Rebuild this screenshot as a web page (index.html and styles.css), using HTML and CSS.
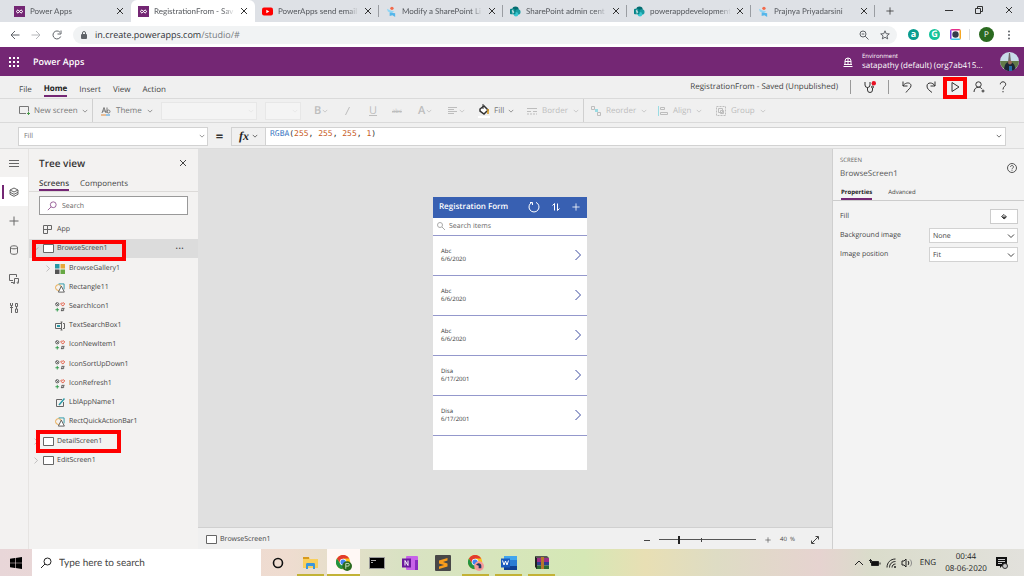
FILE: index.html
```html
<!DOCTYPE html>
<html lang="en">
  <head>
    <meta charset="UTF-8" />
    <meta name="viewport" content="width=device-width, initial-scale=1.0" />
    <title>RegistrationFrom - Saved (Unpublished) - Power Apps</title>
    <link rel="stylesheet" href="styles.css">
  </head>
  <body>
    <svg class="sprite" aria-hidden="true">
      <symbol id="i-close" viewBox="0 0 8 8"><path d="M1 1l6 6M7 1L1 7" /></symbol>
      <symbol id="i-chev" viewBox="0 0 8 8"><path d="M1 2.5l3 3 3-3" /></symbol>
      <symbol id="i-right" viewBox="0 0 8 12"><path d="M1.5 1l5 5-5 5" /></symbol>
      <symbol id="i-plus" viewBox="0 0 10 10"><path d="M5 .5v9M.5 5h9" /></symbol>
      <symbol id="i-search" viewBox="0 0 12 12"><circle cx="7.5" cy="4.5" r="3.5" /><path d="M5 7L1 11" /></symbol>
      <symbol id="i-screen" viewBox="0 0 11 9"><path d="M.5.500h10v8H.500z" fill="#fff" /></symbol>
      <symbol id="i-power" viewBox="0 0 11 11">
        <rect width="11" height="11" fill="#742774" stroke="none" />
        <path d="M5.500 5.500L4 3.800 2.200 5.500 4 7.200l3-3.400 1.800 1.700L7 7.200z" stroke="#fff" fill="none" />
      </symbol>
      <symbol id="i-share" viewBox="0 0 12 12">
        <g stroke="none"><circle cx="6" cy="4" r="3.500" fill="#036c70" /><circle cx="8.500" cy="6.500" r="3" fill="#1a9ba1" /><circle cx="6.500" cy="9" r="2.500" fill="#37c6d0" /><rect y="3" width="6" height="6" rx="1" fill="#038387" /></g>
        <path d="M4 4.500H2.500v1.500H4v1.500H2" stroke="#fff" stroke-width=".8" fill="none" />
      </symbol>
      <symbol id="i-forum" viewBox="0 0 12 12">
        <g stroke="none"><circle cx="6.500" cy="2.500" r="1.800" fill="#f26a4b" /><path d="M1 3l4 2 4 1-3 2-4-2z" fill="#8fd5f5" /><path d="M4 7l6 1v4l-3-2-3 1z" fill="#55b6ea" /></g>
      </symbol>
      <symbol id="i-icons" viewBox="0 0 11 11">
        <circle cx="2.500" cy="2.500" r="1.800" stroke="#555" /><path d="M1.300 1.300l2.400 2.400" stroke="#555" />
        <path d="M8.500 4.500L6.700 2.500a1 1 0 011.800-1 1 1 0 011.800 1z" stroke="#e0492f" />
        <path d="M2.500 6.500v4M.5 8.500h4" stroke="#2a9a45" />
        <path d="M6.500 9.500h3v-2M10.500 7h-3v3" stroke="#555" />
      </symbol>
      <symbol id="i-shape" viewBox="0 0 11 11">
        <circle cx="3.800" cy="5" r="3.200" stroke="#e8a33d" /><path d="M4 1h6v6" stroke="#2795a5" /><path d="M7 3.500l3.300 6.500H3.700z" stroke="#555" fill="#fff" />
      </symbol>
      <symbol id="i-chrome" viewBox="0 0 18 18">
        <g stroke="none"><circle cx="8" cy="8" r="8" fill="#fbc116" /><path d="M1 4a8 8 0 0114 0H8L5 9.500z" fill="#e33b2e" /><path d="M1 4l4 6 5 1-3 5A8 8 0 011 4z" fill="#229342" /><circle cx="8" cy="8" r="3.800" fill="#fff" /><circle cx="8" cy="8" r="3" fill="#4285f4" /></g>
      </symbol>
    </svg>

    <!-- browser tabs -->
    <div class="tabs">
      <div class="tab"><svg class="fav"><use href="#i-power" /></svg><span>Power Apps</span><button aria-label="Close tab"><svg class="ic8"><use href="#i-close" /></svg></button></div>
      <div class="tab active"><svg class="fav"><use href="#i-power" /></svg><span>RegistrationFrom - Sav</span><button aria-label="Close tab"><svg class="ic8"><use href="#i-close" /></svg></button></div>
      <div class="tab sep"><svg class="fav" viewBox="0 0 11 11"><rect y="1.500" width="11" height="8" rx="2" fill="#f00" stroke="none" /><path d="M4.300 3.700v3.600l3-1.800z" fill="#fff" stroke="none" /></svg><span>PowerApps send email</span><button aria-label="Close tab"><svg class="ic8"><use href="#i-close" /></svg></button></div>
      <div class="tab sep"><svg class="fav"><use href="#i-forum" /></svg><span>Modify a SharePoint Li</span><button aria-label="Close tab"><svg class="ic8"><use href="#i-close" /></svg></button></div>
      <div class="tab sep"><svg class="fav"><use href="#i-share" /></svg><span>SharePoint admin cent</span><button aria-label="Close tab"><svg class="ic8"><use href="#i-close" /></svg></button></div>
      <div class="tab sep"><svg class="fav"><use href="#i-share" /></svg><span>powerappdevelopment</span><button aria-label="Close tab"><svg class="ic8"><use href="#i-close" /></svg></button></div>
      <div class="tab sep"><svg class="fav"><use href="#i-forum" /></svg><span>Prajnya Priyadarsini</span><button aria-label="Close tab"><svg class="ic8"><use href="#i-close" /></svg></button></div>
      <button class="new-tab" aria-label="New tab"><svg class="ic8"><use href="#i-plus" /></svg></button>
      <div class="win">
        <button aria-label="Minimize"><svg class="ic8" viewBox="0 0 8 8"><path d="M0 4.500h8" /></svg></button>
        <button aria-label="Restore"><svg class="ic8" viewBox="0 0 8 8"><path d="M.5 2.500h5v5h-5zM2.500 2.500v-2h5v5h-2" /></svg></button>
        <button aria-label="Close"><svg class="ic8"><use href="#i-close" /></svg></button>
      </div>
    </div>

    <div class="address">
      <button aria-label="Back"><svg class="ic10" viewBox="0 0 10 10"><path d="M9.500 5H1M5 1L1 5l4 4" /></svg></button>
      <button class="off" aria-label="Forward"><svg class="ic10" viewBox="0 0 10 10"><path d="M.5 5H9M5 1l4 4-4 4" /></svg></button>
      <button aria-label="Reload"><svg class="ic10" viewBox="0 0 10 10"><path d="M8.700 6.500A4 4 0 118 2.300M9 .5V4H5.500" /></svg></button>
      <div class="url">
        <svg class="lock" viewBox="0 0 6 8"><rect y="3" width="6" height="5" rx="1" fill="#5f6368" stroke="none" /><path d="M1.500 3V2a1.500 1.500 0 013 0v1" /></svg>
        <span class="path">in.create.powerapps.com<i>/studio/#</i></span>
        <svg class="ic10" viewBox="0 0 10 10"><circle cx="4" cy="4" r="3" /><path d="M6.200 6.200L9.500 9.500M2.700 4h2.600" /></svg>
        <svg class="ic10" viewBox="0 0 10 10"><path d="M5 .8l1.200 2.900 3.100.2-2.400 2 .8 3L5 7.300 2.300 8.900l.8-3-2.400-2 3.100-.2z" /></svg>
      </div>
      <div class="exts">
        <b class="ext teal">a</b>
        <b class="ext green">G</b>
        <svg class="ext-cam" viewBox="0 0 11 11"><path d="M0 0h11L5.500 5.500z" fill="#e6308a" /><path d="M11 0v11L5.500 5.500z" fill="#f5a623" /><path d="M11 11H0l5.500-5.500z" fill="#3dc6e8" /><path d="M0 11V0l5.500 5.500z" fill="#7b3fe4" /><rect x="1.500" y="1.500" width="8" height="8" rx="1" fill="#fff" /><circle cx="5.500" cy="5.500" r="3.200" fill="#333c4a" /></svg>
      </div>
      <b class="profile">P</b>
      <button class="more" aria-label="Menu"><svg class="ic10" viewBox="0 0 10 10"><g fill="#5f6368" stroke="none"><circle cx="5" cy="1.500" r="1" /><circle cx="5" cy="5" r="1" /><circle cx="5" cy="8.500" r="1" /></g></svg></button>
    </div>

    <header class="suite">
      <svg class="waffle" viewBox="0 0 10 10"><path d="M0 1h10M0 5h10M0 9h10" stroke="#fff" stroke-width="2" stroke-dasharray="2 2" /></svg>
      <h1>Power Apps</h1>
      <svg class="env-icon" viewBox="0 0 10 10"><path d="M2 7V4a3 3 0 016 0v3M.5 9.500h9M1 7.500h8M5 1v6M2 4.500h6" /></svg>
      <div class="env"><small>Environment</small><span>satapathy (default) (org7ab415...</span></div>
      <svg class="avatar" viewBox="0 0 19 19"><g stroke="none"><circle cx="9.500" cy="9.500" r="9.500" fill="#c9dcea" /><path d="M0 9h19a9.500 9.500 0 01-19 0z" fill="#627a49" /><path d="M9 1h1l1 9H8z" fill="#6d6a68" /><path d="M4 17c1-5 2-7 5.500-7s5 2 6 7a9.500 9.500 0 01-11.500 0z" fill="#1d2635" /><circle cx="10" cy="10.500" r="2" fill="#9a6a55" /><path d="M9 14h3v5H9z" fill="#276ca8" /></g></svg>
    </header>

    <nav class="menu">
      <a href="#file">File</a>
      <a href="#home" class="on">Home</a>
      <a href="#insert">Insert</a>
      <a href="#view">View</a>
      <a href="#action">Action</a>
      <span class="status">RegistrationFrom - Saved (Unpublished)</span>
      <div class="tools">
        <button class="checker" aria-label="App checker"><svg class="ic12" viewBox="0 0 12 12"><path d="M1 1v3a2.500 2.500 0 005 0V1M3.500 6.500V9a2.500 2.500 0 005 0V7" /><circle cx="8.500" cy="6" r="1" /><circle cx="9.800" cy="2.200" r="2.200" fill="#e81123" stroke="none" /></svg></button>
        <button aria-label="Undo"><svg class="ic12" viewBox="0 0 12 12"><path d="M2 .5v4.500h4.500M2 5c2-4 8-4 8-.3C10 7 7 8.500 5 11.500" /></svg></button>
        <button aria-label="Redo"><svg class="ic12" viewBox="0 0 12 12"><path d="M10 .5v4.500H5.500M10 5C8 1 2 1 2 5c0 3 2 4 5 6.500" /></svg></button>
        <button class="play" aria-label="Preview the app"><svg class="ic12" viewBox="0 0 12 12"><path d="M3 1.500v9L10 6z" /></svg></button>
        <button aria-label="Share"><svg class="ic12" viewBox="0 0 12 12"><circle cx="5.500" cy="3.500" r="2.700" /><path d="M1 11c0-3 2-4.800 4.500-4.800 1.500 0 2.700.6 3.500 1.800M10 8.500v3M8.500 10h3" /></svg></button>
        <button aria-label="Help"><svg class="ic12" viewBox="0 0 12 12"><path d="M3.300 3.300c0-3.300 5.400-3.300 5.400 0C8.700 5.500 6 5.500 6 8.500M6 10v1.300" /></svg></button>
      </div>
    </nav>

    <div class="ribbon">
      <button class="grp lit"><svg class="scr" viewBox="0 0 11 9"><path d="M7 7.500H.5v-7h9v5" /><path d="M9.500 6v3M8 7.500h3" stroke="#4a9b4a" /></svg>New screen<svg class="ic6"><use href="#i-chev" /></svg></button>
      <button class="lit theme"><svg class="ic10" viewBox="0 0 10 10"><path d="M1 7l2-5.500L5 7M2 5h2M6 1.500V7M6 5.500c0-2 3-2 3 0s-3 2-3 0" /><path d="M0 9h5" stroke="#e08a3c" /><path d="M5 9h4" stroke="#3c9ae0" /></svg>Theme<svg class="ic6"><use href="#i-chev" /></svg></button>
      <div class="pick font-pick"><select disabled aria-label="Font"></select><svg class="ic6"><use href="#i-chev" /></svg></div>
      <div class="pick size-pick"><select disabled aria-label="Font size"></select><svg class="ic6"><use href="#i-chev" /></svg></div>
      <button disabled class="tight" aria-label="Bold"><b class="glyph">B</b><svg class="ic6"><use href="#i-chev" /></svg></button>
      <button disabled class="tight" aria-label="Italic"><svg class="ic10" viewBox="0 0 10 10"><path d="M5.500 1l-4 8" /></svg></button>
      <button disabled class="tight" aria-label="Underline"><u class="glyph">U</u></button>
      <button disabled class="tight" aria-label="Strikethrough"><s class="strike">abc</s></button>
      <button disabled class="tight" aria-label="Font color"><b class="glyph">A</b><svg class="ic6"><use href="#i-chev" /></svg></button>
      <button disabled class="tight" aria-label="Text align"><svg class="ic10" viewBox="0 0 10 10"><path d="M0 1.500h9M0 3.500h6M0 5.500h9M0 7.500h6" /></svg><svg class="ic6"><use href="#i-chev" /></svg></button>
      <button class="lit fill-btn"><svg class="bucket" viewBox="0 0 12 14"><path d="M2 5l4-3 4 4-4 4-4-3z" stroke="#333" fill="#fff" stroke-width="1.500" /><path d="M5 0v5" stroke="#333" /><path d="M10 5v5" stroke="#d99a1c" stroke-width="1.500" /><path d="M0 13h12" stroke="#fff" stroke-width="2" /></svg>Fill<svg class="ic6"><use href="#i-chev" /></svg></button>
      <button disabled class="grp"><svg class="ic10" viewBox="0 0 10 10"><path d="M0 2.500h10M0 5.500h4M6 5.500h4" /><path d="M0 8h10" stroke-dasharray="2 1" /></svg>Border<svg class="ic6"><use href="#i-chev" /></svg></button>
      <button disabled><svg class="ic10" viewBox="0 0 10 10"><path d="M.5.500h3v3h-3zM6.500 6.500h3v3h-3z" /><path d="M4 3h3v3H4z" stroke="none" fill="#9adbe3" /></svg>Reorder<svg class="ic6"><use href="#i-chev" /></svg></button>
      <button disabled><svg class="ic10" viewBox="0 0 10 10"><path d="M.5 0v10" stroke="#9adbe3" /><path d="M2.500 1.500h4v2h-4zM2.500 6.500h7v2h-7z" /></svg>Align<svg class="ic6"><use href="#i-chev" /></svg></button>
      <button disabled><svg class="ic10" viewBox="0 0 10 10"><path d="M.5.500h9v9h-9z" stroke-dasharray="2 1" /><path d="M2.500 2.500h4v4h-4zM4.500 4.500h3v3h-3z" /></svg>Group<svg class="ic6"><use href="#i-chev" /></svg></button>
    </div>

    <div class="formula">
      <div class="pick prop"><select aria-label="Property"><option>Fill</option></select><svg class="ic6"><use href="#i-chev" /></svg></div>
      <b class="equals">=</b>
      <button class="fx"><em>fx</em><svg class="ic6"><use href="#i-chev" /></svg></button>
      <div class="code" role="textbox" contenteditable="true" spellcheck="false" aria-label="Formula"><span class="fn">RGBA</span>(<span class="num">255</span>, <span class="num">255</span>, <span class="num">255</span>, <span class="num">1</span>)</div>
      <button class="expand" aria-label="Expand formula bar"><svg class="ic6"><use href="#i-chev" /></svg></button>
    </div>

    <main class="studio">
      <nav class="rail">
        <button aria-label="Expand"><svg class="ic10" viewBox="0 0 10 10"><path d="M0 2.500h10M0 5.500h10M0 8.500h10" /></svg></button>
        <button class="on" aria-label="Tree view"><svg class="ic10" viewBox="0 0 10 10"><path d="M5 1l4 2-4 2-4-2zM1 3v2.300l4 2 4-2V3M1 5.300v2l4 2 4-2v-2" /></svg></button>
        <button aria-label="Insert"><svg class="ic10"><use href="#i-plus" /></svg></button>
        <button aria-label="Data"><svg class="ic10" viewBox="0 0 10 10"><path d="M1.500 2.300v5.500c0 2 7 2 7 0V2.300c0-2-7-2-7 0s7 2 7 0" /></svg></button>
        <button aria-label="Media"><svg class="ic10" viewBox="0 0 10 10"><path d="M4 6.500H.5v-6h7V3M2 8.500h2M5.500 9V4.500h4v4" /><circle cx="5" cy="9" r=".7" /><circle cx="8.800" cy="8.700" r=".7" /></svg></button>
        <button aria-label="Advanced tools"><svg class="ic10" viewBox="0 0 10 10"><path d="M1.500 0v2.500h2V0M2.500 3v7M1 4.500h3M6.500.500h2v3h-2zM7.500 3.500V6M6.500 6h2v3.500h-2z" /></svg></button>
      </nav>

      <section class="tree">
        <div class="tree-head"><h2>Tree view</h2><button aria-label="Close"><svg class="ic8"><use href="#i-close" /></svg></button></div>
        <div class="tree-tabs"><a href="#screens" class="on">Screens</a><a href="#components">Components</a></div>
        <label class="find"><svg class="ic10"><use href="#i-search" /></svg><input type="text" placeholder="Search" aria-label="Search" /></label>
        <ul class="nodes">
          <li class="top"><i></i><svg class="ic10" viewBox="0 0 10 10"><path d="M.5.500h4v8h-4zM.5 4.500h8v-4h-4" /></svg><span>App</span></li>
          <li class="top sel"><svg class="down"><use href="#i-chev" /></svg><svg class="scr"><use href="#i-screen" /></svg><span>BrowseScreen1</span><button aria-label="More">···</button><div class="mark"></div></li>
          <li class="sub"><svg class="twist"><use href="#i-right" /></svg><svg class="ic10" viewBox="0 0 10 10"><g stroke="none"><path d="M0 0h4.500v4.500H0z" fill="#2b98a5" /><path d="M5.500 0H10v4.500H5.500z" fill="#e6a93b" /><path d="M0 5.500h4.500V10H0z" fill="#555" /><path d="M5.500 5.500H10V10H5.500z" fill="#67a843" /></g></svg><span>BrowseGallery1</span></li>
          <li class="sub"><i></i><svg class="ic10"><use href="#i-shape" /></svg><span>Rectangle11</span></li>
          <li class="sub"><i></i><svg class="ic10"><use href="#i-icons" /></svg><span>SearchIcon1</span></li>
          <li class="sub"><i></i><svg class="ic10" viewBox="0 0 10 10"><path d="M6 2.500H.5v5H6M8 2.500h1.500v5H8M6.500 1v8M5.500 1h2M5.500 9h2" /><path d="M2 4h3v2H2z" fill="#2b98a5" stroke="none" /></svg><span>TextSearchBox1</span></li>
          <li class="sub"><i></i><svg class="ic10"><use href="#i-icons" /></svg><span>IconNewItem1</span></li>
          <li class="sub"><i></i><svg class="ic10"><use href="#i-icons" /></svg><span>IconSortUpDown1</span></li>
          <li class="sub"><i></i><svg class="ic10"><use href="#i-icons" /></svg><span>IconRefresh1</span></li>
          <li class="sub"><i></i><svg class="ic10" viewBox="0 0 10 10"><path d="M7 1.500H1.500v7h7V4" /><path d="M9.500.5L4 7" stroke="#2b98a5" stroke-width="1.500" /></svg><span>LblAppName1</span></li>
          <li class="sub"><i></i><svg class="ic10"><use href="#i-shape" /></svg><span>RectQuickActionBar1</span></li>
          <li class="top"><svg class="twist"><use href="#i-right" /></svg><svg class="scr"><use href="#i-screen" /></svg><span>DetailScreen1</span><div class="mark detail"></div></li>
          <li class="top"><svg class="twist"><use href="#i-right" /></svg><svg class="scr"><use href="#i-screen" /></svg><span>EditScreen1</span></li>
        </ul>
      </section>

      <section class="work">
        <div class="stage">
          <div class="phone">
            <div class="phone-head">
              <h3>Registration Form</h3>
              <svg class="ic12" viewBox="0 0 12 12"><path d="M4 1.400a5 5 0 104 0M2 1.500h2.500V4" /></svg>
              <svg class="ic8" viewBox="0 0 8 8"><path d="M2.500 7.500v-7M.5 2.500l2-2M5.500.500v7l2-2" /></svg>
              <svg class="ic8"><use href="#i-plus" /></svg>
            </div>
            <label class="phone-find"><svg class="ic8" viewBox="0 0 8 8"><circle cx="3" cy="3" r="2.500" /><path d="M5 5l3 3" /></svg><input type="text" placeholder="Search items" aria-label="Search items" /></label>
            <ul>
              <li><p>Abc<br>6/6/2020</p><svg class="go"><use href="#i-right" /></svg></li>
              <li><p>Abc<br>6/6/2020</p><svg class="go"><use href="#i-right" /></svg></li>
              <li><p>Abc<br>6/6/2020</p><svg class="go"><use href="#i-right" /></svg></li>
              <li><p>Disa<br>6/17/2001</p><svg class="go"><use href="#i-right" /></svg></li>
              <li><p>Disa<br>6/17/2001</p><svg class="go"><use href="#i-right" /></svg></li>
            </ul>
          </div>
        </div>
        <footer class="zoom">
          <svg class="scr"><use href="#i-screen" /></svg><span>BrowseScreen1</span>
          <button class="minus" aria-label="Zoom out"><svg class="ic6" viewBox="0 0 6 6"><path d="M0 3.500h6" /></svg></button>
          <input type="range" min="0" max="100" value="20" aria-label="Zoom" />
          <button aria-label="Zoom in"><svg class="ic6"><use href="#i-plus" /></svg></button>
          <span class="pct">40 &nbsp;%</span>
          <button aria-label="Fit to window"><svg class="ic8" viewBox="0 0 8 8"><path d="M1 7l6-6M4.500.5h3v3M.5 4.500v3h3" /></svg></button>
        </footer>
      </section>

      <aside class="props">
        <div class="props-head">
          <div><small>SCREEN</small><h2>BrowseScreen1</h2></div>
          <svg class="ic10" viewBox="0 0 10 10"><circle cx="5" cy="5" r="4.500" /><path d="M3.500 4c0-2 3-2 3 0 0 1-1.500 1-1.500 2.300M5 7.300v.7" /></svg>
        </div>
        <div class="props-tabs"><a href="#properties" class="on">Properties</a><a href="#advanced">Advanced</a></div>
        <div class="field"><span>Fill</span><button class="swatch" aria-label="Fill color"><svg class="ic8" viewBox="0 0 8 8"><path d="M1.500 3.500L4 1.500l2.500 2.500L4 6z" fill="#fff" /><path d="M2 4h4L4 6z" fill="#444" /></svg></button></div>
        <div class="field"><label for="bg">Background image</label><div class="pick"><select id="bg"><option>None</option></select><svg class="ic8"><use href="#i-chev" /></svg></div></div>
        <div class="field"><label for="pos">Image position</label><div class="pick"><select id="pos"><option>Fit</option></select><svg class="ic8"><use href="#i-chev" /></svg></div></div>
      </aside>
    </main>

    <div class="taskbar">
      <button class="start" aria-label="Start"><svg class="ic12" viewBox="0 0 12 12"><path d="M0 1.700l5-.7v4.700H0zM5.600.900L12 0v5.700H5.600zM0 6.300h5V11l-5-.7zM5.600 6.300H12V12l-6.400-.9z" fill="#000" stroke="none" /></svg></button>
      <label class="task-find"><svg class="ic12"><use href="#i-search" /></svg><input type="text" placeholder="Type here to search" aria-label="Type here to search" /></label>
      <div class="apps">
        <button aria-label="Cortana"><svg class="ic12" viewBox="0 0 12 12"><circle cx="6" cy="6" r="4.500" stroke="#111" stroke-width="1.600" /></svg></button>
        <button class="run" aria-label="File Explorer"><svg class="app" viewBox="0 0 16 16"><g stroke="none"><path d="M0 2h6l1 2h8v9H0z" fill="#f9cf5c" /><path d="M0 2h6v2H0z" fill="#d89a1e" /><path d="M3 14V9.500C3 8 4 8 4 8h7s1 0 1 1.500V14h-2v-3H5v3z" fill="#3c97dd" /></g></svg></button>
        <button class="run now" aria-label="Chrome"><svg class="app" viewBox="0 0 18 18"><use href="#i-chrome" width="18" height="18" /><circle cx="12.500" cy="12.500" r="5.500" fill="#2b6a20" stroke="none" /><path d="M11 15.500v-6h2.500a1.500 1.500 0 010 3H11" stroke="#cfe3c9" /></svg></button>
        <button aria-label="Command Prompt"><svg class="app" viewBox="0 0 16 16"><path d="M.5 2.500h15v11H.5z" fill="#000" stroke="#999" /><path d="M2 5.500h5M2 7.500h2" stroke="#aaa" /></svg></button>
        <button aria-label="OneNote"><svg class="app" viewBox="0 0 16 16"><g stroke="none"><rect x="4" y="1" width="12" height="14" rx="1" fill="#c763e8" /><path d="M13 5h3v10h-3z" fill="#8a2cc0" /><rect y="3.500" width="9" height="9" fill="#6b1a9c" /></g><path d="M3 10.500v-5l3 5v-5" stroke="#fff" /></svg></button>
        <button aria-label="Sublime Text"><svg class="app" viewBox="0 0 16 16"><rect width="16" height="16" rx="1" fill="#484848" stroke="none" /><path d="M12.500 3L4 5.500v3l5 1.500-5 1.500v2.500l8.500-2.500V8.500L8 7l4.500-1.500z" fill="#f99d1c" stroke="none" /></svg></button>
        <button class="run" aria-label="Chrome profile"><svg class="app" viewBox="0 0 18 18"><use href="#i-chrome" width="18" height="18" /><circle cx="12.500" cy="12.500" r="5.500" fill="#f59a9a" stroke="none" /><path d="M9 11c2-3 6-2 6 1v3h-3v-3z" fill="#223a63" stroke="none" /></svg></button>
        <button class="run" aria-label="Word"><svg class="app" viewBox="0 0 16 16"><g stroke="none"><rect x="3" y="1" width="13" height="14" rx="1" fill="#2b7cd3" /><path d="M3 1h13v4H3z" fill="#41a5ee" /><path d="M3 11h13v4H3z" fill="#103f91" /><rect y="3.500" width="9" height="9" fill="#185abd" /></g><path d="M1.500 5.500L3 10l1.500-4L6 10l1.500-4.500" stroke="#fff" /></svg></button>
        <button class="run" aria-label="WinRAR"><svg class="app" viewBox="0 0 16 16"><g stroke="none"><path d="M1 1h12l2 2H3z" fill="#555" /><path d="M2 3h13v4H2z" fill="#9b2d86" /><path d="M2 7h13v3.500H2z" fill="#2c3f8f" /><path d="M2 10.500h13V14H2z" fill="#2b6b34" /><path d="M7 2h3v12H7z" fill="#b5772b" /><path d="M1 1l2 2v11l-2-2z" fill="#222" /></g></svg></button>
      </div>
      <div class="tray">
        <svg class="ic10" viewBox="0 0 10 10"><path d="M1 7l4-4 4 4" /></svg>
        <svg class="ic12" viewBox="0 0 12 12"><path d="M2.500 4.500h7v4h-7zM11 5.500v2" fill="#111" /><path d="M0 3.500h3M1.500 2v4" /></svg>
        <svg class="ic10" viewBox="0 0 10 10"><path d="M1 9.500C1 4.500 4.500 1 9.500 1M3.500 9.500c0-3.500 2.500-6 6-6M6 9.500C6 7.500 7.500 6 9.500 6" /><circle cx="9" cy="9" r="1" fill="#222" stroke="none" /></svg>
        <svg class="ic12" viewBox="0 0 12 12"><path d="M1 4h2l2-2v8L3 8H1z" /><path d="M7 4c1 1 1 3 0 4" /><path d="M9 2.500c2 2 2 5 0 7" stroke="#888" /></svg>
        <span class="lang">ENG</span>
        <time>00:44<br>08-06-2020</time>
        <svg class="ic12" viewBox="0 0 12 12"><path d="M0 0h11v9H6l-2 2V9H0z" fill="#111" stroke="none" /><path d="M2 2.500h7M2 4.500h7M2 6.500h4" stroke="#ccc" /><circle cx="9" cy="9" r="2.500" fill="#ccc" stroke="#333" /></svg>
      </div>
    </div>
  </body>
</html>
```

FILE: styles.css
```css
* {
  box-sizing: border-box;
}

body {
  margin: 0;
  height: 100vh;
  display: flex;
  flex-direction: column;
  overflow: hidden;
  background: #f0f0f0;
  color: #444;
  font: 7px/11px "Open Sans", "Noto Sans", sans-serif;
  text-rendering: geometricPrecision;
}

h1, h2, h3, p, ul {
  margin: 0;
  padding: 0;
}

ul {
  list-style: none;
}

a {
  color: inherit;
  text-decoration: none;
}

button, input, select {
  margin: 0;
  padding: 0;
  border: none;
  background: none;
  color: inherit;
  font: inherit;
  text-rendering: inherit;
  min-width: 0;
}

button {
  display: flex;
  align-items: center;
  justify-content: center;
}

svg {
  flex: none;
  fill: none;
  stroke: currentColor;
  stroke-width: 1;
}

.sprite {
  position: absolute;
  width: 0;
  height: 0;
}

.ic6 { width: 6px; height: 6px; }
.ic8 { width: 8px; height: 8px; }
.ic10 { width: 10px; height: 10px; }
.ic12 { width: 12px; height: 12px; }
.scr { width: 11px; height: 9px; }
.twist { width: 5px; height: 8px; }

/* browser */
.tabs {
  display: flex;
  height: 22px;
  padding-left: 7px;
  background: #dee1e6;
  color: #55585d;
  font: 8px/12px Lato, "Open Sans", sans-serif;
}

.tab {
  flex: 0 1 124px;
  display: flex;
  align-items: center;
  gap: 5px;
  min-width: 0;
  padding: 0 7px;
}

.tab span {
  flex: 1;
  overflow: hidden;
  white-space: nowrap;
  -webkit-mask-image: linear-gradient(90deg, #000 85%, transparent);
}

.tab.active {
  background: #fff;
  border-radius: 6px 6px 0 0;
}

.tab.sep {
  background: linear-gradient(#9a9da2, #9a9da2) right center / 1px 12px no-repeat;
}

.tab button, .new-tab, .win {
  color: #333;
}

.fav {
  width: 11px;
  height: 11px;
}

.new-tab {
  width: 30px;
}

.win {
  display: flex;
  gap: 22px;
  margin-left: auto;
  padding: 0 11px 2px 0;
}

.address {
  display: flex;
  align-items: center;
  gap: 11px;
  height: 25px;
  padding: 0 10px;
  background: #fff;
  color: #5f6368;
}

.address .off {
  color: #b5b7ba;
}

.url {
  flex: 1;
  display: flex;
  align-items: center;
  gap: 11px;
  height: 18px;
  padding: 0 7px 0 8px;
  border-radius: 9px;
  background: #f1f3f4;
}

.lock {
  width: 6px;
  height: 8px;
  margin-right: -3px;
}

.path {
  flex: 1;
  font: 9px/14px "Open Sans", sans-serif;
  color: #303236;
}

.path i {
  font-style: normal;
  color: #777b80;
}

.exts {
  display: flex;
  align-items: center;
  gap: 10px;
  padding-right: 8px;
  border-right: 1px solid #dadce0;
}

.ext, .profile {
  width: 11px;
  height: 11px;
  border-radius: 50%;
  color: #fff;
  font-size: 9px;
  line-height: 10px;
  text-align: center;
}

.teal { background: #0a9c8f; }
.green { background: #15c39a; }

.ext-cam {
  width: 11px;
  height: 11px;
  stroke: none;
  border-radius: 2px;
}

.profile {
  width: 15px;
  height: 15px;
  margin: 0 -1px 0 -2px;
  background: #2b6a20;
  font-size: 8px;
  font-weight: 400;
  line-height: 15px;
}

.more {
  width: 10px;
}

/* suite header */
.suite {
  display: flex;
  align-items: center;
  height: 29px;
  padding: 0 5px 0 9px;
  background: #742774;
  color: #fff;
}

.waffle {
  width: 10px;
  height: 10px;
}

.suite h1 {
  flex: 1;
  margin-left: 14px;
  font-size: 9px;
  font-weight: 600;
  line-height: 14px;
}

.env-icon {
  width: 10px;
  height: 10px;
  margin-right: 9px;
}

.env {
  width: 138px;
}

.env small {
  display: block;
  font-size: 6px;
  line-height: 8px;
}

.env span {
  font-size: 8px;
  line-height: 12px;
}

.avatar {
  width: 19px;
  height: 19px;
}

/* menu and ribbon */
.menu {
  display: flex;
  align-items: center;
  gap: 12px;
  height: 22px;
  padding: 0 9px 0 19px;
  font-size: 8px;
  line-height: 12px;
}

.menu a {
  padding-top: 6px;
}

.menu .on {
  color: #222;
  font-weight: 700;
  border-bottom: 2px solid #742774;
  line-height: 12px;
}

.status {
  margin-left: auto;
  line-height: 14px;
}

.tools {
  display: flex;
  align-items: center;
  color: #333;
}

.tools button {
  position: relative;
  width: 24px;
  height: 14px;
}

.tools .checker {
  width: 39px;
  margin-right: 6px;
  border: 1px solid #999;
  border-width: 0 1px;
}

.play::after {
  content: "";
  position: absolute;
  inset: -3px 0 -5px;
  border: 4px solid #f00;
}

.ribbon {
  display: grid;
  grid-template-columns: 74px 68px 104px 49px 30px 25px 23px 26px 30px 30px 49px 64px 67px 58px auto;
  align-items: center;
  height: 25px;
  padding-left: 19px;
  border: 1px solid #dadada;
  border-width: 1px 0;
  color: #bdbdbd;
  font-size: 8px;
  line-height: 14px;
}

.ribbon button {
  justify-content: flex-start;
  gap: 5px;
  color: #bdbdbd;
  white-space: nowrap;
}

.ribbon .lit {
  color: #777;
}

.ribbon .grp {
  height: 23px;
  border-right: 1px solid #d0d0d0;
}

.ribbon .grp:not(.lit) {
  margin-right: 7px;
}

.ribbon .grp.lit {
  gap: 4px;
}

.ribbon .theme {
  padding-left: 8px;
}

.ribbon .tight {
  gap: 1px;
}

.ribbon .fill-btn {
  gap: 4px;
}

.glyph {
  font-size: 11px;
  font-weight: 400;
}

b.glyph {
  font-weight: 600;
}

.strike {
  font-size: 6px;
}

/* select with its own chevron laid over the end */
.pick {
  display: grid;
  align-items: center;
}

.pick > * {
  grid-area: 1 / 1;
}

.pick select {
  width: 100%;
  height: 100%;
  padding: 1px 3px 0;
  appearance: none;
  border: 1px solid #d2d2d2;
  border-radius: 0;
  background: #fff;
}

.pick svg {
  justify-self: end;
  margin-right: 3px;
  pointer-events: none;
}

.ribbon .pick {
  height: 18px;
  margin-right: 8px;
}

.ribbon .pick select {
  background: #f6f6f6;
  border-color: #e4e4e4;
}

.ribbon .size-pick {
  margin-right: 13px;
}

.bucket {
  width: 12px;
  height: 14px;
}

.formula {
  display: flex;
  align-items: center;
  height: 26px;
  padding: 1px 18px 0 18px;
  border-bottom: 1px solid #dcdcdc;
}

.prop {
  width: 190px;
  height: 19px;
  color: #777;
}

.formula .prop select {
  padding: 1px 5px 0;
}

.equals {
  width: 23px;
  color: #333;
  font-size: 13px;
  text-align: center;
}

.fx {
  width: 35px;
  height: 19px;
  gap: 3px;
  border: 1px solid #d2d2d2;
}

.fx em {
  color: #222;
  font: italic bold 12px/16px "Liberation Serif", serif;
}

.code {
  flex: 1;
  height: 19px;
  padding: 0 4px;
  border: 1px solid #d2d2d2;
  border-width: 1px 0;
  background: #fff;
  color: #333;
  font: 8px/12px "DejaVu Sans Mono", monospace;
}

.fn { color: #3b78c4; }
.num { color: #c75a1c; }

.expand {
  width: 14px;
  height: 19px;
  border: 1px solid #d2d2d2;
  border-left: none;
  background: #fff;
}

/* studio */
.studio {
  flex: 1;
  display: flex;
  min-height: 0;
}

.rail {
  width: 29px;
  border-right: 1px solid #e6e4e2;
  background: #f3f2f1;
  color: #666;
}

.rail button {
  width: 28px;
  height: 29px;
}

.rail button:first-child {
  height: 28px;
}

.rail .on {
  background: linear-gradient(#742774, #742774) 2px center / 2px 14px no-repeat #fff;
}

.tree {
  width: 169px;
  background: #f3f2f1;
}

.tree-head {
  display: flex;
  align-items: center;
  justify-content: space-between;
  height: 28px;
  padding: 0 11px 0 10px;
}

.tree-head h2 {
  color: #333;
  font-size: 10px;
  font-weight: 600;
  line-height: 14px;
}

.tree-tabs {
  display: flex;
  gap: 11px;
  height: 15px;
  padding-left: 10px;
  border-bottom: 1px solid #dcdad8;
  font-size: 8px;
  line-height: 14px;
}

.tree-tabs .on {
  font-weight: 600;
  border-bottom: 2px solid #742774;
}

.find {
  display: flex;
  align-items: center;
  gap: 5px;
  height: 19px;
  margin: 4px 10px 5px;
  padding: 0 7px;
  border: 1px solid #999;
  background: #fff;
  color: #8a4a8a;
}

.find input {
  color: #666;
}

.find input, .phone-find input {
  padding-top: 1px;
}

::placeholder {
  color: #666;
  opacity: 1;
}

.nodes li {
  position: relative;
  display: flex;
  align-items: center;
  height: 19px;
}

.nodes .top {
  padding-left: 4px;
}

.nodes .sub {
  padding-left: 16px;
}

.nodes .sel, .nodes .sub:nth-child(7), .nodes .sub:nth-child(11) {
  margin-bottom: 1px;
}

.nodes i, .nodes .twist, .nodes .down {
  width: 6px;
  height: 7px;
  margin-right: 4px;
  color: #999;
}

.nodes .scr {
  margin-right: 3px;
  color: #666;
}

.nodes .ic10 {
  margin-right: 4px;
  color: #666;
}

.nodes .sel {
  background: #dcdcdc;
}

.nodes button {
  margin-left: auto;
  margin-right: 14px;
  font-size: 11px;
}

.mark {
  position: absolute;
  left: 3px;
  top: 1px;
  width: 94px;
  height: 21px;
  border: 4px solid #f00;
}

.mark.detail {
  left: 7px;
  top: -2px;
  width: 85px;
  height: 23px;
}

.work {
  flex: 1;
  display: flex;
  flex-direction: column;
  min-width: 0;
}

.stage {
  flex: 1;
  display: flex;
  align-items: center;
  justify-content: center;
  padding: 0 10px 10px 0;
  background: #e0e0e0;
}

.phone {
  width: 154px;
  height: 273px;
  background: #fff;
}

.phone-head {
  display: flex;
  align-items: center;
  gap: 12px;
  height: 21px;
  padding: 0 7px 0 6px;
  background: #3860b2;
  color: #fff;
}

.phone-head h3 {
  flex: 1;
  font-size: 8px;
  font-weight: 600;
  line-height: 12px;
  white-space: nowrap;
}

.phone-find {
  display: flex;
  align-items: center;
  gap: 4px;
  height: 18px;
  padding: 0 4px;
  border-bottom: 1px solid #9498cc;
  color: #aaa;
}

.phone li {
  display: flex;
  align-items: center;
  justify-content: space-between;
  height: 40px;
  padding: 0 5px 0 8px;
  border-bottom: 1px solid #9498cc;
  color: #333;
  font-size: 6px;
  line-height: 8px;
}

.go {
  width: 8px;
  height: 12px;
  color: #3b4ba0;
}

.zoom {
  display: flex;
  align-items: center;
  height: 22px;
  padding: 2px 13px 0 8px;
  border-top: 1px solid #d0d0d0;
  background: #f0f0f0;
}

.zoom .scr {
  margin-right: 3px;
  color: #666;
}

.minus {
  margin-left: auto;
}

.zoom input {
  width: 97px;
  height: 10px;
  margin: 0 9px;
  appearance: none;
  background: linear-gradient(#444, #444) 42px center / 1px 4px no-repeat, linear-gradient(#555, #555) center / 100% 1px no-repeat;
}

.zoom input::-webkit-slider-thumb {
  appearance: none;
  width: 2px;
  height: 8px;
  background: #222;
}

.pct {
  margin: 0 16px 0 9px;
  font-size: 6px;
}

.props {
  width: 192px;
  border-left: 1px solid #cfcfcf;
  background: #f3f3f3;
}

.props-head {
  display: flex;
  align-items: center;
  justify-content: space-between;
  padding: 6px 7px 6px 7px;
  color: #555;
}

.props-head small {
  display: block;
  color: #666;
  font-size: 6px;
}

.props-head h2 {
  font-size: 8px;
  font-weight: 400;
  line-height: 15px;
}

.props-tabs {
  display: flex;
  gap: 16px;
  height: 14px;
  margin-bottom: 6px;
  padding-left: 8px;
  border-bottom: 1px solid #ccc;
  font-size: 6px;
}

.props-tabs .on {
  color: #222;
  font-weight: 700;
  border-bottom: 2px solid #742774;
}

.field {
  display: flex;
  align-items: center;
  justify-content: space-between;
  height: 19px;
  padding: 0 6px 0 7px;
}

.field .pick {
  width: 89px;
  height: 15px;
}

.swatch {
  width: 28px;
  height: 15px;
  border: 1px solid #ccc;
  background: #fff;
}

/* windows taskbar */
.taskbar {
  display: flex;
  height: 27px;
  background: linear-gradient(90deg, #e8d6d8, #efdcd0 28%, #d9e2c3 39%, #d5e8b5 57%, #e8dfb4 63%, #dedcc4 70%, #e6d3d0 80%, #dadccb 85%, #e2e1dc);
  color: #222;
}

.start {
  width: 32px;
}

.task-find {
  display: flex;
  align-items: center;
  gap: 7px;
  width: 229px;
  padding-left: 8px;
  background: #fff;
}

.task-find input {
  flex: 1;
  font: 10px/14px Lato, "Open Sans", sans-serif;
}

.task-find ::placeholder {
  color: #444;
}

.apps {
  display: flex;
}

.apps button {
  width: 33px;
}

.apps .run {
  background: linear-gradient(#c2b236, #c2b236) center bottom / 27px 2px no-repeat;
}

.apps .now {
  background-color: #fff8f5;
  background-size: 33px 2px;
}

.app {
  width: 16px;
  height: 16px;
}

.tray {
  display: flex;
  align-items: center;
  gap: 5px;
  margin-left: auto;
  padding-right: 16px;
  font-size: 8px;
}

.lang {
  margin-left: 2px;
}

.tray time {
  width: 50px;
  line-height: 12px;
  text-align: center;
}
```
